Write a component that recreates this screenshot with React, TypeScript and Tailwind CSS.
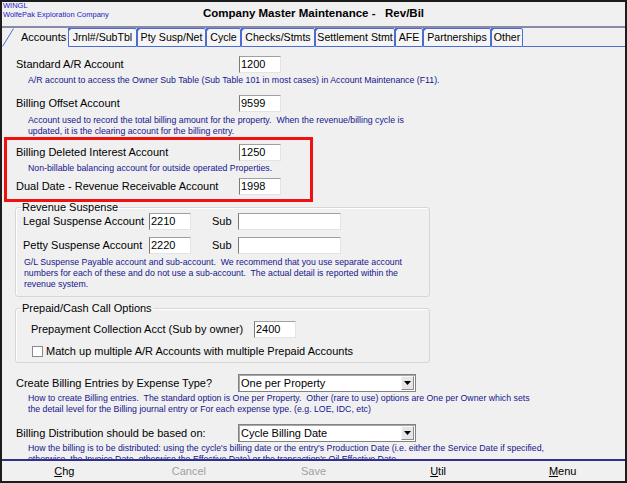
import React from 'react';

const tabs = [
  { label: 'Jrnl#/SubTbl', w: 'w-[69px]' },
  { label: 'Pty Susp/Net', w: 'w-[69px]' },
  { label: 'Cycle', w: 'w-[35px]' },
  { label: 'Checks/Stmts', w: 'w-[74px]' },
  { label: 'Settlement Stmt', w: 'w-[80px]' },
  { label: 'AFE', w: 'w-[28px]' },
  { label: 'Partnerships', w: 'w-[68px]' },
  { label: 'Other', w: 'w-[32px]' },
];

const TextBox = ({ value = '', w }: { value?: string; w: string }) => (
  <div
    className={`${w} h-[17px] shrink-0 border border-t-[#a0a0a0] border-l-[#7a7a7a] border-r-[#e3e3e3] border-b-[#e3e3e3] bg-white pl-[1px] text-[11px] leading-[15px] text-black`}>
    {value}
  </div>
);

const Field = ({ label, value }: { label: string; value: string }) => (
  <div className="flex h-[17px] items-center">
    <span className="w-[223px] shrink-0 text-[11px] leading-[13px]">{label}</span>
    <TextBox value={value} w="w-[42px]" />
  </div>
);

const Desc = ({ text, className = '' }: { text: string; className?: string }) => (
  <div className={`whitespace-pre text-[8.75px] leading-[11px] text-[#15158e] ${className}`}>{text}</div>
);

const Select = ({ value }: { value: string }) => (
  <div className="flex h-[18px] w-[178px] shrink-0 items-center border border-[#828282] bg-white shadow-[inset_1px_1px_0_#a9a9a9]">
    <span className="flex-1 pl-[2px] text-[11px] leading-[14px]">{value}</span>
    <span className="mr-[1px] flex h-[14px] w-[13px] items-center justify-center border border-t-[#f8f8f8] border-l-[#f8f8f8] border-r-[#8a8a8a] border-b-[#8a8a8a] bg-[#e6e6e6]">
      <svg width="7" height="4" viewBox="0 0 7 4">
        <path d="M0 0h7L3.5 4z" fill="#000" />
      </svg>
    </span>
  </div>
);

const SelectRow = ({ label, value }: { label: string; value: string }) => (
  <div className="flex h-[18px] items-center">
    <span className="w-[222px] shrink-0 text-[11px] leading-[13px]">{label}</span>
    <Select value={value} />
  </div>
);

export default function App() {
  return (
    <div className="flex h-[483px] w-[627px] flex-col overflow-hidden border-2 border-[#1c1c1c] bg-[#f0f0f0] font-['Liberation_Sans',Arial,sans-serif] text-black">
      {/* header */}
      <div className="grid h-[24px] shrink-0 grid-cols-[1fr_auto_1fr] items-center">
        <div className="-mt-[1px] self-start pl-[1px] text-[7.5px] leading-[9px] text-[#1c1cc0]">
          <div>WINGL</div>
          <div>WolfePak Exploration Company</div>
        </div>
        <div className="whitespace-pre text-[11.5px] font-bold">Company Master Maintenance -   Rev/Bil</div>
        <div />
      </div>
      <div className="h-[2px] shrink-0 bg-[#8a8aa8]" />

      {/* tabs */}
      <div className="flex h-[19px] shrink-0 text-[11px]">
        <div className="flex h-full w-[66px] shrink-0 items-center">
          <svg width="12" height="19" viewBox="0 0 12 19" className="shrink-0">
            <path d="M0.5 18.5L11.5 0.5" stroke="#4a6cd4" strokeWidth="1" fill="none" />
          </svg>
          <span className="pl-[7px]">Accounts</span>
        </div>
        {tabs.map((t) => (
          <div
            key={t.label}
            className={`${t.w} relative flex h-full shrink-0 items-center justify-center whitespace-nowrap rounded-t-[2px] border border-[#4a6cd4] bg-[#f5f5f5] text-[10.6px] leading-[13px]`}>
            <span className="absolute -top-[1px] -left-[1px] h-0 w-0 border-t-[4px] border-r-[4px] border-t-[#4a6cd4] border-r-transparent" />
            {t.label}
          </div>
        ))}
        <div className="flex-1 border-b border-[#4a6cd4]" />
      </div>

      {/* content */}
      <div className="flex-1 overflow-hidden pl-[14px]">
        <div className="mt-[9px]">
          <Field label="Standard A/R Account" value="1200" />
        </div>
        <Desc
          className="mt-[2px] pl-[12px]"
          text="A/R account to access the Owner Sub Table (Sub Table 101 in most cases) in Account Maintenance (F11)."
        />

        <div className="mt-[9px]">
          <Field label="Billing Offset Account" value="9599" />
        </div>
        <Desc
          className="mt-[3px] pl-[12px]"
          text={'Account used to record the total billing amount for the property.  When the revenue/billing cycle is\nupdated, it is the clearing account for the billing entry.'}
        />

        <div className="-ml-[12px] w-[309px] border-[3px] border-[#f01010] pt-[4px] pb-[4px] pl-[9px]">
          <Field label="Billing Deleted Interest Account" value="1250" />
          <Desc className="mt-[2px] pl-[12px]" text="Non-billable balancing account for outside operated Properties." />
          <div className="mt-[4px]">
            <Field label="Dual Date - Revenue Receivable Account" value="1998" />
          </div>
        </div>

        <fieldset className="-ml-[1px] w-[415px] rounded-[3px] border border-[#d6d6d6] pb-[6px] shadow-[inset_1px_1px_0_#ffffff]">
          <legend className="ml-[5px] px-[1px] text-[11px] leading-[11px]">Revenue Suspense</legend>
          <div className="flex h-[17px] items-center pl-[7px]">
            <span className="w-[126px] shrink-0 text-[11px]">Legal Suspense Account</span>
            <TextBox value="2210" w="w-[42px]" />
            <span className="ml-[21px] w-[26px] shrink-0 text-[11px]">Sub</span>
            <TextBox w="w-[103px]" />
          </div>
          <div className="mt-[7px] flex h-[17px] items-center pl-[7px]">
            <span className="w-[126px] shrink-0 text-[11px]">Petty Suspense Account</span>
            <TextBox value="2220" w="w-[42px]" />
            <span className="ml-[21px] w-[26px] shrink-0 text-[11px]">Sub</span>
            <TextBox w="w-[103px]" />
          </div>
          <Desc
            className="mt-[3px] pl-[8px]"
            text={'G/L Suspense Payable account and sub-account.  We recommend that you use separate account\nnumbers for each of these and do not use a sub-account.  The actual detail is reported within the\nrevenue system.'}
          />
        </fieldset>

        <fieldset className="mt-[6px] -ml-[1px] w-[415px] rounded-[3px] border border-[#d6d6d6] pb-[4px] shadow-[inset_1px_1px_0_#ffffff]">
          <legend className="ml-[5px] px-[1px] text-[11px] leading-[11px]">Prepaid/Cash Call Options</legend>
          <div className="mt-[7px] flex h-[17px] items-center pl-[15px]">
            <span className="w-[223px] shrink-0 text-[11px]">Prepayment Collection Acct (Sub by owner)</span>
            <TextBox value="2400" w="w-[42px]" />
          </div>
          <div className="mt-[7px] flex h-[13px] items-center pl-[16px]">
            <span className="h-[11px] w-[11px] shrink-0 border border-[#8a8a8a] bg-white" />
            <span className="ml-[3px] text-[11px]">Match up multiple A/R Accounts with multiple Prepaid Accounts</span>
          </div>
        </fieldset>

        <div className="mt-[11px]">
          <SelectRow label="Create Billing Entries by Expense Type?" value="One per Property" />
        </div>
        <Desc
          className="mt-[1px] pl-[12px]"
          text={'How to create Billing entries.  The standard option is One per Property.  Other (rare to use) options are One per Owner which sets\nthe detail level for the Billing journal entry or For each expense type. (e.g. LOE, IDC, etc)'}
        />

        <div className="mt-[9px]">
          <SelectRow label="Billing Distribution should be based on:" value="Cycle Billing Date" />
        </div>
        <Desc
          className="mt-[1px] pl-[12px]"
          text={"How the billing is to be distributed: using the cycle's billing date or the entry's Production Date (i.e. either the Service Date if specified,\notherwise, the Invoice Date, otherwise the Effective Date) or the transaction's Oil Effective Date."}
        />
      </div>

      <div className="h-[2px] shrink-0 bg-[#30308a]" />

      {/* toolbar */}
      <div className="grid h-[20px] shrink-0 grid-cols-5 items-center text-center text-[11px] leading-[13px]">
        <div>
          <span className="underline underline-offset-[1px]">C</span>hg
        </div>
        <div className="text-[#a0a0a0]">Cancel</div>
        <div className="text-[#a0a0a0]">Save</div>
        <div>
          <span className="underline underline-offset-[1px]">U</span>til
        </div>
        <div>
          <span className="underline underline-offset-[1px]">M</span>enu
        </div>
      </div>
    </div>
  );
}
